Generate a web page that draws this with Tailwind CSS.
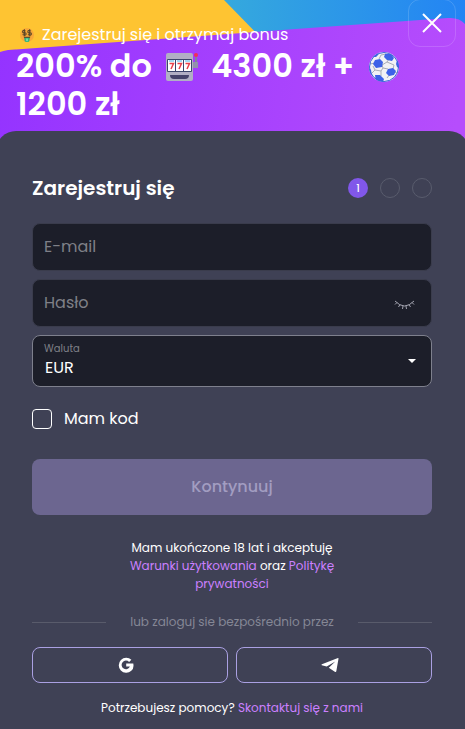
<!DOCTYPE html>
<html lang="pl">
<head>
    <meta charset="UTF-8">
    <meta name="viewport" content="width=device-width, initial-scale=1.0">
    <title>Zarejestruj się</title>
    <script src="https://cdn.jsdelivr.net/npm/@tailwindcss/browser@4"></script>
</head>
<body class="overflow-x-hidden bg-[#3f4155] font-['Poppins','Inter',sans-serif] text-white">
    <!-- Bonus banner -->
    <header class="relative overflow-hidden bg-[#a23eff] px-4 pt-[22px] pb-6">
        <svg class="absolute inset-0 h-full w-full" viewBox="0 0 465 147" preserveAspectRatio="none" aria-hidden="true">
            <defs>
                <linearGradient id="sky" x1="224" y1="0" x2="465" y2="0" gradientUnits="userSpaceOnUse">
                    <stop offset="0" stop-color="#35a9dd"/>
                    <stop offset="1" stop-color="#2384f4"/>
                </linearGradient>
                <linearGradient id="violet" x1="0" y1="0" x2="465" y2="60" gradientUnits="userSpaceOnUse">
                    <stop offset="0" stop-color="#9433ff"/>
                    <stop offset="1" stop-color="#b64dfc"/>
                </linearGradient>
            </defs>
            <path fill="#fec432" d="M0 0h270v60H0z"/>
            <path fill="url(#sky)" d="M224 0h241v40H263z"/>
            <path fill="url(#violet)" d="M0 52Q3 51 8 50L448 18Q459 17 465 24V147H0z"/>
        </svg>
        <div class="relative">
            <p class="flex items-center gap-2 pl-1 text-base leading-[25px]">
                <svg class="h-[14px] w-[14px]" viewBox="0 0 16 16" aria-hidden="true">
                    <circle cx="8" cy="8" r="8" fill="#f9a938"/>
                    <g fill="none" stroke="#5a4528" stroke-width="1.3">
                        <path d="M6.500 3.500Q3 2 3 4T5 5.500T7 7Q6.500 9 3 7.500M5 1.500v8"/>
                        <path d="M12.500 3.500Q9 2 9 4T11 5.500T13 7Q12.500 9 9 7.500M11 1.500v8"/>
                    </g>
                    <path fill="#5f3525" d="M4 10h8q-1 3-4 3t-4-3z"/>
                    <path fill="#2fb67c" d="M5 11h6v2q0 3-3 3t-3-3z"/>
                    <path stroke="#d9f5dd" d="M8 12v3"/>
                </svg>
                <span>Zarejestruj się i otrzymaj bonus</span>
            </p>
            <h1 class="text-[32px] leading-[38px] font-semibold">
                200% do
                <svg class="mx-1.5 inline h-8 w-8 align-middle" viewBox="0 0 32 32" aria-hidden="true">
                    <path stroke="#84819b" stroke-width="2" d="M30 5v8"/>
                    <circle cx="30" cy="3" r="2" fill="#f02f55"/>
                    <path fill="#9290ad" d="M27 10h5v6h-5z"/>
                    <rect y="1" width="27" height="28" rx="2" fill="#b1afc4"/>
                    <rect x="1" y="7" width="25" height="13" rx="1" fill="#3c456c"/>
                    <path fill="#fff" d="M2 8h7v11H2zM10 8h7v11h-7zM18 8h7v11h-7z"/>
                    <path stroke="#4bb6e8" d="M3 9h5M11 9h5M19 9h5"/>
                    <path fill="none" stroke="#e8414a" stroke-width="1.500" d="M3.500 11.500h4L5 17M11.500 11.500h4L13 17M19.500 11.500h4L21 17"/>
                    <path fill="#45436a" d="M4 23h19q0 4-4 4H8q-4 0-4-4z"/>
                </svg>
                4300 zł +
                <svg class="mx-1.5 inline h-8 w-8 align-middle" viewBox="0 0 32 32" aria-hidden="true">
                    <defs>
                        <clipPath id="ball"><circle cx="16" cy="15" r="15"/></clipPath>
                    </defs>
                    <circle cx="16" cy="15" r="15" fill="#f1f2f5"/>
                    <g clip-path="url(#ball)">
                        <path fill="none" stroke="#a9acb6" d="M11 7l2-4 5-1M7 11l-5 1M14 13l5-3 2-3M14 13l1 3-2 3-6-1-2-4M19 10l7 3M15 16l5 1M13 19v5M22 22l-3 4M26 20l4 1M26 13l-1 4M7 18l-3 3"/>
                        <path fill="#3d62e8" d="M7 8l5-1 3 3-1 5-6 1-3-4zM20 17l5-1 3 3-2 4-5 1-3-3zM17 2l6 0 3 4-2 3-5-1-3-3zM7 23l5 0 4 4-1 3H8zM0 15l3 3 1 5-3 1zM29 8l3 3v6l-3-2-1-3zM4 5l5-4 2 1-3 3z"/>
                    </g>
                    <circle cx="16" cy="15" r="14.500" fill="none" stroke="#3c64d9"/>
                </svg>
                1200 zł
            </h1>
        </div>
        <button type="button" aria-label="Zamknij" class="absolute -top-px right-[9px] flex h-12 w-12 items-center justify-center rounded-xl border border-white/15">
            <svg class="h-5 w-5" viewBox="0 0 20 20" fill="none" stroke="#fff" stroke-width="2" aria-hidden="true">
                <path d="M1 1l18 18M19 1L1 19"/>
            </svg>
        </button>
    </header>

    <!-- Registration form -->
    <main class="relative -mx-1 -mt-4 rounded-t-[20px] bg-[#3f4155] pt-11 pr-[37px] pb-3 pl-9">
        <form>
            <div class="flex items-center justify-between">
                <h2 class="text-[20px] leading-[26px] font-semibold">Zarejestruj się</h2>
                <ol class="flex gap-3 text-[10px]">
                    <li class="flex h-5 w-5 items-center justify-center rounded-full bg-[#8157ea] font-medium">1</li>
                    <li class="h-5 w-5 rounded-full border border-[#595c6d]"></li>
                    <li class="h-5 w-5 rounded-full border border-[#595c6d]"></li>
                </ol>
            </div>

            <div class="mt-[22px] flex flex-col gap-2">
                <input type="email" aria-label="E-mail" placeholder="E-mail" class="h-12 w-full rounded-lg border border-[#3a3c4c] bg-[#1c1e29] px-[11px] pb-0.5 text-base placeholder:text-[#7f8087]">
                <div class="relative">
                    <input type="password" aria-label="Hasło" placeholder="Hasło" class="h-12 w-full rounded-lg border border-[#3a3c4c] bg-[#1c1e29] pr-12 pb-0.5 pl-[11px] text-base placeholder:text-[#7f8087]">
                    <button type="button" aria-label="Pokaż hasło" class="absolute top-3 right-4 flex h-6 w-6 items-center justify-center">
                        <svg class="h-5 w-[22px]" viewBox="0 0 22 20" fill="none" stroke="#a2a3af" aria-hidden="true">
                            <path d="M2 8q9.500 10 19 0M4 9.500l-2 2M7 11.500l-1.500 2.500M10 13l-.5 3M13 13l.5 3M16 11.500l1.500 2.500M19 9.500l2 2"/>
                        </svg>
                    </button>
                </div>
                <div class="relative">
                    <label for="currency" class="absolute top-2 left-3 text-[10px] leading-3 text-[#7f8087]">Waluta</label>
                    <select id="currency" class="block h-13 w-full appearance-none rounded-lg border border-[#7e808d] bg-[#1c1e29] px-3 pt-3.5 text-base">
                        <option>EUR</option>
                        <option>PLN</option>
                    </select>
                    <svg class="pointer-events-none absolute top-6 right-4 h-1 w-2" viewBox="0 0 8 4" fill="#fff" aria-hidden="true">
                        <path d="M0 0h8L4 4z"/>
                    </svg>
                </div>
            </div>

            <label class="mt-5 flex items-center gap-3 text-base">
                <input type="checkbox" class="h-5 w-5 appearance-none rounded border border-white checked:bg-[#8157ea]">
                Mam kod
            </label>

            <button type="submit" disabled class="mt-7 h-14 w-full rounded-lg bg-[#6c6690] text-base font-medium text-[#a29dc1]">Kontynuuj</button>
        </form>

        <p class="mx-auto mt-6 max-w-[220px] text-center text-xs leading-[18px]">
            Mam ukończone 18 lat i akceptuję
            <a href="#" class="text-[#cb80ff]">Warunki użytkowania</a> oraz <a href="#" class="text-[#cb80ff]">Politykę prywatności</a>
        </p>

        <div class="mt-5 flex items-center gap-6 text-xs leading-[18px] text-[#858795]">
            <span class="h-px flex-1 bg-[#595b6b]"></span>
            lub zaloguj sie bezpośrednio przez
            <span class="h-px flex-1 bg-[#595b6b]"></span>
        </div>

        <div class="mt-4 grid grid-cols-2 gap-2">
            <button type="button" aria-label="Google" class="flex h-9 items-center justify-center rounded-lg border border-[#aaa0e2] pr-2">
                <svg class="h-4 w-4" viewBox="0 0 16 16" fill="#fff" aria-hidden="true">
                    <path d="M8.200 6.600h7.100q.9 5-2 7.200A7.500 7.500 0 1 1 13.400 2.800L11.100 5A4.300 4.300 0 1 0 11.900 9.600H8.200z"/>
                </svg>
            </button>
            <button type="button" aria-label="Telegram" class="flex h-9 items-center justify-center rounded-lg border border-[#aaa0e2] pr-2">
                <svg class="h-4 w-[18px]" viewBox="0 0 18 16" fill="#fff" aria-hidden="true">
                    <path d="M17.500 1.700L15.300 14.200Q15 15.500 13.800 14.700L7.800 10.700 14.300 4.500 5.700 9.600.8 8.300Q0 7.800.9 7.300L16.300 1.200Q17.700.8 17.500 1.700z"/>
                </svg>
            </button>
        </div>

        <p class="mt-4 text-center text-xs leading-[18px]">Potrzebujesz pomocy? <a href="#" class="text-[#cb80ff]">Skontaktuj się z nami</a></p>
    </main>
</body>
</html>
